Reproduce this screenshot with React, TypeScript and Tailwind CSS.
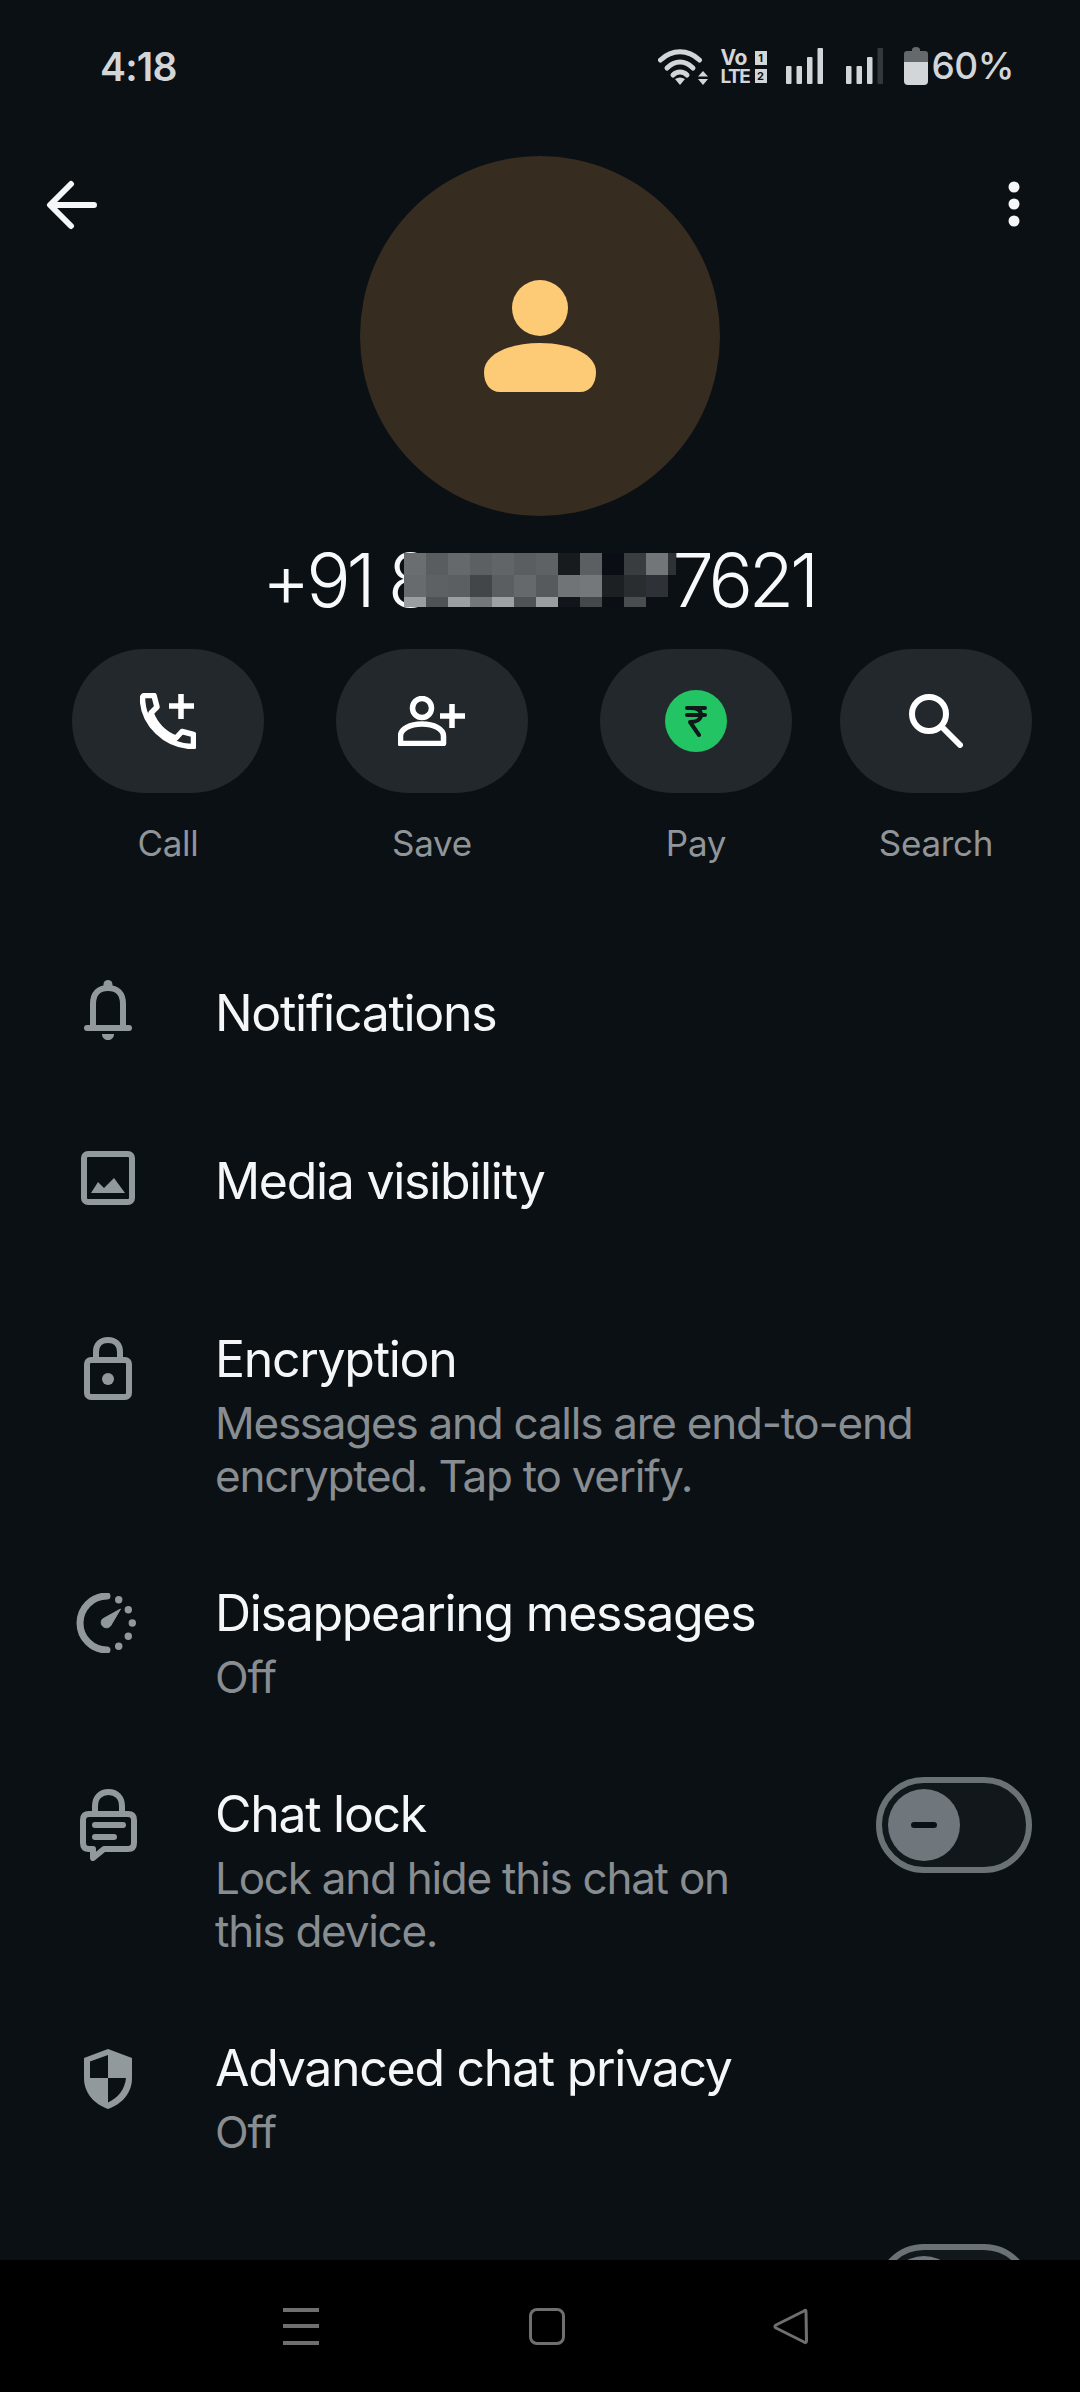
import type { ReactNode } from "react";

const grid: (string | null)[][] = [
  ["#6b6e71", "#5a5d60", "#66696c", "#5d6063", "#626568", "#5b5e61", "#5f6265", "#171b1e", "#5c5f62", "#0a0e14", "#3a3d40", "#727679"],
  ["#686b6e", "#5e6164", "#5c5f62", "#434649", "#5b5e61", "#66696c", "#575a5d", "#717477", "#75787b", "#1c2023", "#2a2d30", "#2e3236"],
  ["#9b9ea1", "#505356", "#9c9fa2", "#74777a", "#9ea1a4", "#505356", "#9b9ea1", "#12161a", "#44484b", "#0b0f13", "#4a4d50", null],
];

const G = "#92999d";
const S = "#d3d6d8";

function Toggle() {
  return (
    <div className="w-[156px] h-[96px] -mt-[7px] shrink-0 rounded-full border-[6px] border-[#6b7276] bg-[#12171b] flex items-center pl-[6px]">
      <div className="w-[72px] h-[72px] rounded-full bg-[#6f777c] flex items-center justify-center">
        <div className="w-[26px] h-[6px] rounded-full bg-[#0b1014]" />
      </div>
    </div>
  );
}

function Action({ label, children }: { label: string; children: ReactNode }) {
  return (
    <div className="w-[192px] flex flex-col items-center">
      <div className="w-[192px] h-[144px] rounded-full bg-[#23282c] flex items-center justify-center">{children}</div>
      <div className="mt-[30px] text-[35px] leading-[40px] tracking-[-0.3px] text-[#8f9599]">{label}</div>
    </div>
  );
}

function Row({ icon, title, sub, className, right, iconClass }: { icon?: ReactNode; title?: string; sub?: string[]; className: string; right?: ReactNode; iconClass: string }) {
  return (
    <div className={`flex shrink-0 pl-[72px] pr-[48px] ${className}`}>
      <div className={`w-[72px] h-[72px] shrink-0 flex items-center justify-center ${iconClass}`}>{icon}</div>
      <div className="ml-[71px] flex-1">
        <div className="text-[50px] leading-[60px] tracking-[-1.3px] text-[#f4f6f7]">{title}</div>
        {sub && (
          <div className="mt-[8px] text-[44px] leading-[53px] tracking-[-1.25px] text-[#878d91]">
            {sub.map((s) => (
              <div key={s}>{s}</div>
            ))}
          </div>
        )}
      </div>
      {right}
    </div>
  );
}

function Bars({ dim, className }: { dim?: boolean; className: string }) {
  return (
    <svg className={className} width="37" height="36" viewBox="0 0 37 36">
      <rect x="0" y="18" width="5.5" height="18" rx="1" fill={S} />
      <rect x="10.5" y="18" width="5.5" height="18" rx="1" fill={S} />
      <rect x="21" y="9" width="5.5" height="27" rx="1" fill={S} />
      <rect x="31.5" y="0" width="5.5" height="36" rx="1" fill={dim ? "#33383c" : S} />
    </svg>
  );
}

export default function App() {
  return (
    <div className="w-[1080px] h-[2392px] bg-[#0b1014] flex flex-col overflow-hidden font-['Inter',sans-serif]">
      <div className="h-[2260px] shrink-0 overflow-hidden flex flex-col">
        {/* Status bar */}
        <div className="h-[130px] shrink-0 flex items-start justify-between pl-[100px] pr-[66px] pt-[44px]">
          <span className="text-[39px] leading-[46px] font-semibold text-[#d3d6d8] tracking-[-0.8px]">4:18</span>
          <div className="flex items-center h-[44px] text-[#d3d6d8]">
            <svg width="50" height="37" viewBox="0 0 50 37" fill="none">
              <path d="M2.5 12C14 1 30 1 41.5 12" stroke={S} strokeWidth="5" strokeLinecap="round" />
              <path d="M9 20C17 12 27 12 35 20" stroke={S} strokeWidth="5" strokeLinecap="round" />
              <path d="M15 27C19 23 25 23 29 27" stroke={S} strokeWidth="5" strokeLinecap="round" />
              <path d="M17 31Q22 28 27 31L22 37Z" fill={S} />
              <path d="M45 23L50 28.5H40ZM40 31H50L45 37Z" fill={S} />
            </svg>
            <div className="ml-[13px] w-[46px] flex flex-col font-bold">
              <div className="flex justify-between items-center h-[20px]">
                <span className="text-[21px] leading-[20px] tracking-[-0.5px]">Vo</span>
                <span className="w-[12px] h-[14px] bg-[#d3d6d8] text-[#0b1014] text-[11px] leading-[14px] text-center">1</span>
              </div>
              <div className="flex justify-between items-center h-[17px]">
                <span className="text-[19px] leading-[17px] tracking-[-1.5px]">LTE</span>
                <span className="w-[12px] h-[14px] bg-[#d3d6d8] text-[#0b1014] text-[11px] leading-[14px] text-center">2</span>
              </div>
            </div>
            <Bars className="ml-[19px]" />
            <Bars dim className="ml-[23px]" />
            <svg className="ml-[21px]" width="24" height="38" viewBox="0 0 24 38">
              <path d="M8 3Q8 0 12 0Q16 0 16 3V4H21Q24 4 24 7V15H0V7Q0 4 3 4H8Z" fill="#66696c" />
              <path d="M0 15H24V34Q24 38 20 38H4Q0 38 0 34Z" fill={S} />
            </svg>
            <span className="ml-[4px] text-[37px] leading-[46px] font-medium tracking-[-0.5px]">60%</span>
          </div>
        </div>

        {/* Avatar with the top controls over it */}
        <div className="relative h-[386px] shrink-0 flex justify-center pt-[26px]">
          <svg className="absolute left-[46px] top-[49px]" width="52" height="52" viewBox="0 0 52 52" fill="none">
            <path d="M48 26H5M25 5L4 26L25 47" stroke="#f4f6f7" strokeWidth="6" strokeLinecap="round" strokeLinejoin="round" />
          </svg>
          <svg className="absolute left-[1006px] top-[49px]" width="16" height="52" viewBox="0 0 16 52">
            <circle cx="8" cy="8" r="5.5" fill="#f4f6f7" />
            <circle cx="8" cy="25" r="5.5" fill="#f4f6f7" />
            <circle cx="8" cy="42" r="5.5" fill="#f4f6f7" />
          </svg>
          <div className="w-[360px] h-[360px] rounded-full bg-[#362c20] flex items-center justify-center">
            <svg width="112" height="112" viewBox="0 0 112 112">
              <circle cx="56" cy="28" r="28" fill="#fdca76" />
              <path d="M0 92C0 75 24 63 56 63C88 63 112 75 112 92C112 104 106 112 96 112H16C6 112 0 104 0 92Z" fill="#fdca76" />
            </svg>
          </div>
        </div>

        {/* Name */}
        <div className="relative h-[133px] shrink-0 flex justify-between pl-[262px] pr-[265px] pt-[19px] text-[74px] leading-[90px] font-light tracking-[-4.2px] text-[#f8f9fa]">
          <span>+91 8</span>
          <span>7621</span>
          <div className="absolute left-[404px] top-[37px] flex flex-col">
            {grid.map((row, i) => (
              <div key={i} className={`flex ${i === 2 ? "h-[10px]" : "h-[22px]"}`}>
                {row.map((c, j) => (
                  <div key={j} className="w-[22px]" style={{ backgroundColor: c ?? "transparent" }} />
                ))}
                {i === 0 && <div className="w-[8px] bg-[#2e3236]" />}
              </div>
            ))}
          </div>
        </div>

        {/* Actions */}
        <div className="flex pl-[72px] shrink-0 h-[215px]">
          <Action label="Call">
            <svg width="56" height="56" viewBox="0 0 56 56" fill="none">
              <path d="M2.5 5C2.5 3.5 3.5 2.5 5 2.5H14L17 14L11 20C15 31 24 41 36 45L42 38.5L53.5 41.5V53.5C25 53.5 2.5 30 2.5 5Z" stroke="#fff" strokeWidth="5.5" strokeLinejoin="round" />
              <path d="M41 1V26M29 13H54" stroke="#fff" strokeWidth="5.5" />
            </svg>
          </Action>
          <div className="w-[72px] shrink-0" />
          <Action label="Save">
            <svg width="68" height="50" viewBox="0 0 68 50" fill="none">
              <circle cx="24" cy="12" r="9.5" stroke="#fff" strokeWidth="5.5" />
              <path d="M2.5 47.5V40C2.5 33 12 28 24 28C36 28 45.5 33 45.5 40V47.5Z" stroke="#fff" strokeWidth="5.5" strokeLinejoin="round" />
              <path d="M54 8V32M42 20H67" stroke="#fff" strokeWidth="5.5" />
            </svg>
          </Action>
          <div className="w-[72px] shrink-0" />
          <Action label="Pay">
            <div className="w-[62px] h-[62px] rounded-full bg-[#22c464] flex items-center justify-center">
              <svg width="22" height="31" viewBox="0 0 22 31" fill="none">
                <path d="M2 2H20M2 9H20M6 2C13 2 16 5 16 9C16 13 12 16 5 16L14 29" stroke="#10181a" strokeWidth="4" strokeLinecap="round" strokeLinejoin="round" />
              </svg>
            </div>
          </Action>
          <div className="w-[48px] shrink-0" />
          <Action label="Search">
            <svg width="54" height="54" viewBox="0 0 54 54" fill="none">
              <circle cx="20" cy="20" r="17" stroke="#fff" strokeWidth="6" />
              <path d="M33 33L51 51" stroke="#fff" strokeWidth="6" strokeLinecap="round" />
            </svg>
          </Action>
        </div>

        <div className="h-[119px] shrink-0" />

        <Row
          title="Notifications"
          className="h-[168px]"
          iconClass="-mt-[9px]"
          icon={
            <svg width="48" height="60" viewBox="0 0 48 60" fill="none">
              <path d="M9 46V24C9 13 15 8 24 8C33 8 39 13 39 24V46" stroke={G} strokeWidth="6" />
              <circle cx="24" cy="4.5" r="4.5" fill={G} />
              <path d="M3 48H45" stroke={G} strokeWidth="6" strokeLinecap="round" />
              <path d="M18 54H30C30 62 18 62 18 54Z" fill={G} />
            </svg>
          }
        />
        <Row
          title="Media visibility"
          className="h-[178px]"
          iconClass="-mt-[9px]"
          icon={
            <svg width="54" height="54" viewBox="0 0 54 54" fill="none">
              <rect x="3" y="3" width="48" height="48" rx="4" stroke={G} strokeWidth="6" />
              <path d="M10 42L17 31L23 37L33 27L44 42Z" fill={G} />
            </svg>
          }
        />
        <Row
          title="Encryption"
          sub={["Messages and calls are end-to-end", "encrypted. Tap to verify."]}
          className="h-[254px]"
          iconClass="mt-[3px]"
          icon={
            <svg width="48" height="63" viewBox="0 0 48 63" fill="none">
              <path d="M12 22V15C12 7 17 3 24 3C31 3 36 7 36 15V22" stroke={G} strokeWidth="6" />
              <rect x="3" y="23" width="42" height="37" rx="4" stroke={G} strokeWidth="6" />
              <circle cx="24" cy="42" r="6" fill={G} />
            </svg>
          }
        />
        <Row
          title="Disappearing messages"
          sub={["Off"]}
          className="h-[201px]"
          iconClass="mt-[4px] -ml-[2px] mr-[2px]"
          icon={
            <svg width="60" height="60" viewBox="0 0 60 60" fill="none">
              <path d="M31 3A27 27 0 0 0 31 57" stroke={G} strokeWidth="7" strokeLinecap="round" />
              <circle cx="42.7" cy="6.7" r="3.7" fill={G} />
              <circle cx="52.3" cy="16.7" r="3.7" fill={G} />
              <circle cx="56.3" cy="30" r="3.7" fill={G} />
              <circle cx="52.3" cy="43.3" r="3.7" fill={G} />
              <circle cx="42.7" cy="53.3" r="3.7" fill={G} />
              <path d="M44.5 16L34.5 33A5 5 0 0 1 26.5 26Z" fill={G} stroke={G} strokeWidth="1" strokeLinejoin="round" />
            </svg>
          }
        />
        <Row
          title="Chat lock"
          sub={["Lock and hide this chat on", "this device."]}
          className="h-[254px]"
          iconClass="mt-[5px]"
          right={<Toggle />}
          icon={
            <svg width="57" height="72" viewBox="0 0 57 72" fill="none">
              <path d="M15 23V17C15 8 21 3 28.5 3C36 3 42 8 42 17V23" stroke={G} strokeWidth="6" />
              <path d="M9 25H48Q54 25 54 31V54Q54 60 48 60H24L13 69V60H9Q3 60 3 54V31Q3 25 9 25Z" stroke={G} strokeWidth="6" strokeLinejoin="round" />
              <path d="M15 36H43M15 48H34" stroke={G} strokeWidth="6" strokeLinecap="round" />
            </svg>
          }
        />
        <Row
          title="Advanced chat privacy"
          sub={["Off"]}
          className="h-[213px]"
          iconClass="mt-[5px]"
          icon={
            <svg width="48" height="60" viewBox="0 0 48 60">
              <path d="M24 0L48 9V29C48 44 38 55 24 60C10 55 0 44 0 29V9Z" fill={G} />
              <path d="M24 6L6 12.5V29H24Z" fill="#0b1014" />
              <path d="M24 29H42C41 40 34 49 24 53.5Z" fill="#0b1014" />
            </svg>
          }
        />
        <Row className="h-[100px]" iconClass="" right={<Toggle />} />
      </div>

      {/* Navigation bar */}
      <div className="h-[132px] shrink-0 bg-black flex items-center pl-[283px]">
        <div className="w-[36px] flex flex-col gap-[12.5px]">
          <div className="h-[4px] bg-[#6f6f6f]" />
          <div className="h-[4px] bg-[#6f6f6f]" />
          <div className="h-[4px] bg-[#6f6f6f]" />
        </div>
        <div className="ml-[210px] w-[36px] h-[37px] rounded-[8px] border-[3px] border-[#6f6f6f]" />
        <svg className="ml-[208px]" width="36" height="37" viewBox="0 0 36 37" fill="none">
          <path d="M33 3.5C33 2 32 2 31 3L3 17C1.5 18 1.5 19 3 20L31 34C32 35 33.5 35 33.5 33Z" stroke="#6f6f6f" strokeWidth="3" strokeLinejoin="round" />
        </svg>
      </div>
    </div>
  );
}
